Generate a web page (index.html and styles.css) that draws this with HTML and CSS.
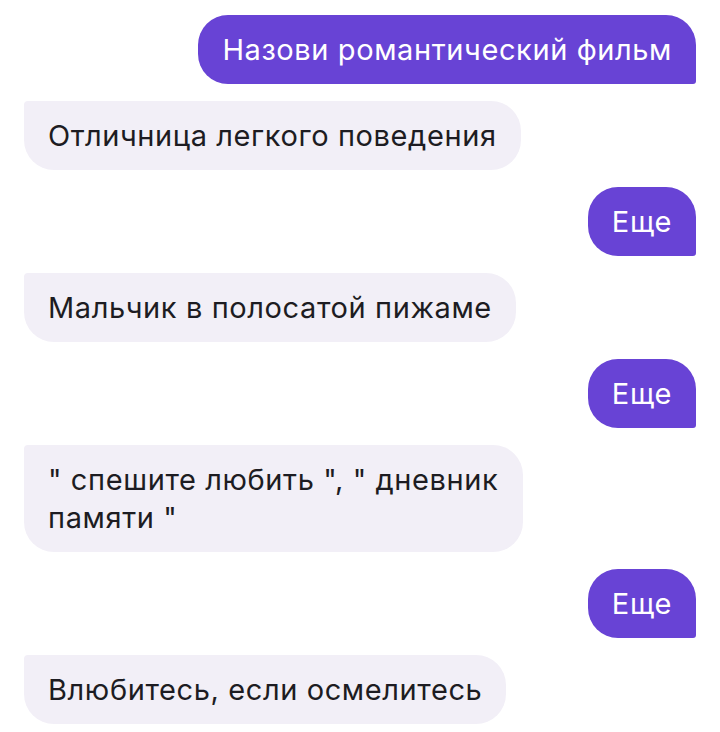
FILE: index.html
```html
<!DOCTYPE html>
<html lang="ru">
<head>
  <meta charset="utf-8">
  <title>Диалог</title>
  <link rel="stylesheet" href="styles.css">
</head>
<body>
  <div class="chat">
    <div class="msg msg-user">Назови романтический фильм</div>
    <div class="msg msg-bot">Отличница легкого поведения</div>
    <div class="msg msg-user">Еще</div>
    <div class="msg msg-bot">Мальчик в полосатой пижаме</div>
    <div class="msg msg-user">Еще</div>
    <div class="msg msg-bot">" спешите любить ", " дневник памяти "</div>
    <div class="msg msg-user">Еще</div>
    <div class="msg msg-bot">Влюбитесь, если осмелитесь</div>
  </div>
</body>
</html>
```

FILE: styles.css
```css
body {
  margin: 0;
  background: #fff;
  font-family: Inter, "Noto Sans", sans-serif;
}

.chat {
  display: flex;
  flex-direction: column;
  gap: 17px;
  padding: 15px 24px;
}

.msg {
  padding: 15.5px 24px;
  font-size: 29px;
  line-height: 38px;
  letter-spacing: 0.6px;
  border-radius: 30px;
}

.msg-user {
  align-self: flex-end;
  max-width: 480px;
  background: #6843d5;
  color: #fff;
  border-bottom-right-radius: 3px;
}

.msg-bot {
  align-self: flex-start;
  max-width: 451px;
  background: #f2eff7;
  color: #1d1c22;
  border-top-left-radius: 4px;
}
```
